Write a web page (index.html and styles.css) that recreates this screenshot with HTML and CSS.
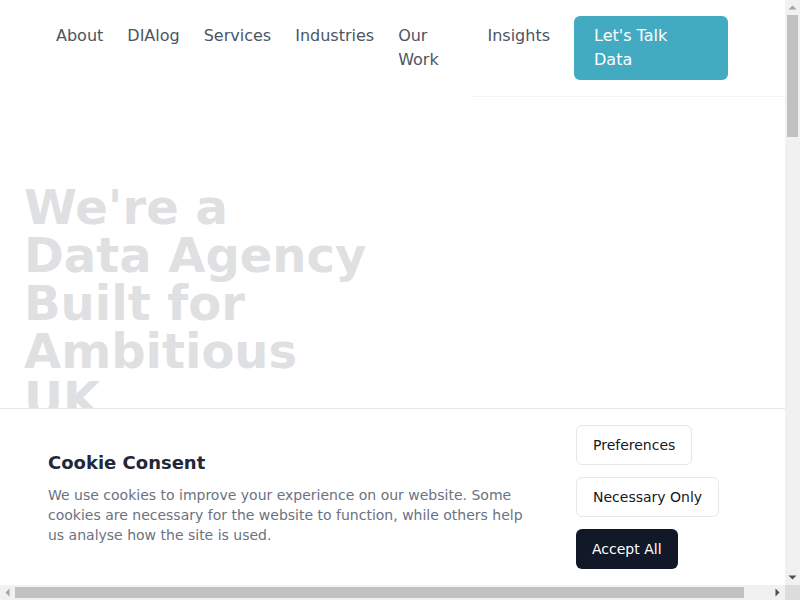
FILE: index.html
```html
<!DOCTYPE html>
<html lang="en">
<head>
<meta charset="utf-8">
<title>Data Agency</title>
<link rel="stylesheet" href="styles.css">
</head>
<body>
<div class="viewport">
  <header class="site-header">
    <div class="header-row">
      <nav class="main-nav">
        <a class="nav-link" href="#">About</a>
        <a class="nav-link" href="#">DIAlog</a>
        <a class="nav-link" href="#">Services</a>
        <a class="nav-link" href="#">Industries</a>
        <a class="nav-link" href="#">Our Work</a>
        <a class="nav-link" href="#">Insights</a>
        <a class="nav-cta" href="#">Let's Talk Data</a>
      </nav>
    </div>
    <div class="header-rule"></div>
  </header>
  <main class="page">
    <section class="hero">
      <h1 class="hero-title">We're a Data Agency Built for Ambitious UK</h1>
    </section>
  </main>
  <div class="cookie-banner">
    <div class="cookie-text">
      <h2 class="cookie-title">Cookie Consent</h2>
      <p class="cookie-copy">We use cookies to improve your experience on our website. Some cookies are necessary for the website to function, while others help us analyse how the site is used.</p>
    </div>
    <div class="cookie-actions">
      <button class="btn btn-outline">Preferences</button>
      <button class="btn btn-outline">Necessary Only</button>
      <button class="btn btn-dark">Accept All</button>
    </div>
  </div>
</div>
<div class="vscroll">
  <div class="sb-btn"><svg width="15" height="15" viewBox="0 0 15 15"><path d="M3.5 9.5h8L7.5 5.5z" fill="#a3a3a3"/></svg></div>
  <div class="vtrack"><div class="vthumb"></div></div>
  <div class="sb-btn"><svg width="15" height="15" viewBox="0 0 15 15"><path d="M3.5 5.5h8L7.5 9.5z" fill="#505050"/></svg></div>
</div>
<div class="hscroll">
  <div class="sb-btn"><svg width="15" height="15" viewBox="0 0 15 15"><path d="M9.5 3.5v8L5.5 7.5z" fill="#a3a3a3"/></svg></div>
  <div class="htrack"><div class="hthumb"></div></div>
  <div class="sb-btn"><svg width="15" height="15" viewBox="0 0 15 15"><path d="M5.5 3.5v8l4-4z" fill="#505050"/></svg></div>
</div>
<div class="sb-corner"></div>
</body>
</html>
```

FILE: styles.css
```css
* { box-sizing: border-box; }
html, body {
  margin: 0;
  padding: 0;
  height: 100%;
  overflow: hidden;
}
body {
  font-family: "DejaVu Sans", sans-serif;
  color: #111827;
  background: #ffffff;
  display: grid;
  grid-template-columns: 1fr 15px;
  grid-template-rows: 1fr 15px;
}
a { text-decoration: none; }

.viewport {
  position: relative;
  overflow: hidden;
  min-width: 0;
  min-height: 0;
}

/* scrollbars */
.vscroll, .hscroll {
  display: flex;
  background: #f1f1f1;
}
.vscroll { flex-direction: column; }
.sb-btn {
  flex: 0 0 15px;
  width: 15px;
  height: 15px;
  display: flex;
}
.vtrack { flex: 1; }
.vthumb {
  margin: 0 2px;
  height: 122px;
  background: #c1c1c1;
}
.htrack { flex: 1; padding-top: 2px; }
.hthumb {
  width: 729px;
  height: 11px;
  background: #c1c1c1;
}
.sb-corner { background: #dcdcdc; }

/* header */
.site-header { background: #ffffff; }
.header-row {
  padding: 16px 57px 16px 56px;
}
.main-nav {
  display: flex;
  align-items: flex-start;
  gap: 24px;
}
.nav-link {
  color: #4b5563;
  font-size: 16px;
  line-height: 24px;
  padding: 8px 0 7px;
}
.nav-cta {
  flex: 0 0 154px;
  background: #42aac1;
  color: #ffffff;
  font-size: 16px;
  line-height: 24px;
  padding: 8px 20px;
  border-radius: 6px;
}
.header-rule {
  margin-left: 471px;
  border-top: 1px solid #f3f4f6;
}

/* hero */
.hero {
  padding: 86px 24px 0;
}
.hero-title {
  margin: 0;
  max-width: 343px;
  font-size: 48px;
  line-height: 48px;
  font-weight: 700;
  color: #dfe0e2;
}

/* cookie banner */
.cookie-banner {
  position: absolute;
  left: 0;
  right: 0;
  bottom: 0;
  background: #ffffff;
  border-top: 1px solid #e5e7eb;
  display: flex;
  align-items: center;
  gap: 48px;
  padding: 16px 48px;
}
.cookie-text { width: 480px; flex-shrink: 0; }
.cookie-title {
  margin: 0 0 8px;
  font-size: 18px;
  line-height: 28px;
  font-weight: 700;
  color: #1f2937;
}
.cookie-copy {
  margin: 0;
  font-size: 14px;
  line-height: 20px;
  color: #6b7280;
}
.cookie-actions {
  display: flex;
  flex-direction: column;
  align-items: flex-start;
  gap: 12px;
}
.btn {
  font-family: "DejaVu Sans", sans-serif;
  font-size: 14px;
  line-height: 20px;
  padding: 9px 16px;
  border-radius: 6px;
  border: 1px solid #e5e7eb;
  cursor: pointer;
  white-space: nowrap;
}
.btn-outline { background: #ffffff; color: #111827; }
.btn-dark {
  background: #111827;
  color: #ffffff;
  border: 0;
  padding: 10px 16px;
}
```
